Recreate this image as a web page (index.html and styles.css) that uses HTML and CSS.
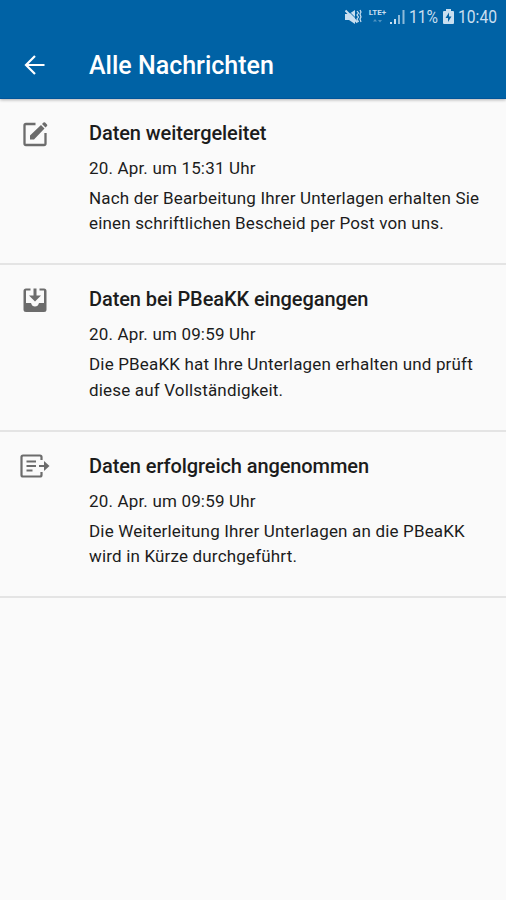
FILE: index.html
```html
<!DOCTYPE html>
<html lang="de">
<head>
<meta charset="utf-8">
<title>Alle Nachrichten</title>
<link rel="stylesheet" href="styles.css">
</head>
<body>
<header class="header">
  <div class="status">
    <svg class="mute" width="17" height="16" viewBox="0 0 17 16"><path d="M0 5h4l6-4v14l-6-4H0z" fill="currentColor"/><path d="M2 .5l12 12" stroke="#0062a5" stroke-width="1"/><path d="M.5 1.500l12 12" stroke="currentColor" stroke-width="2"/><path d="M12 2l1.500 2L12 6l1.500 2L12 10l1.500 3M15 1l1 2-1 2 1 3-1 2 1 3" fill="none" stroke="currentColor" stroke-width="1.200"/></svg>
    <span class="lte"><span>LTE+</span><svg width="9" height="4" viewBox="0 0 9 4" opacity=".4"><path d="M0 2.500L2 0l2 2.500zM5 1h4L7 3.500z" fill="currentColor"/></svg></span>
    <svg class="signal" width="16" height="16" viewBox="0 0 16 16"><path d="M0 13h2v2H0zM4 10h2v5H4z" fill="currentColor"/><path d="M8 6h2v9H8zM12.500 1h2v14h-2z" fill="currentColor" opacity=".7"/></svg>
    <span class="battery-text">11%</span>
    <svg class="battery" width="11" height="16" viewBox="0 0 11 16"><path d="M3 0h5v2h2q1 0 1 1v11q0 1-1 1H1q-1 0-1-1V3q0-1 1-1h2z" fill="currentColor"/><path d="M6 3.500L2.500 9H5v4l3.500-5.500H6z" fill="#0062a5"/></svg>
    <span class="clock">10:40</span>
  </div>
  <div class="toolbar">
    <svg class="back" width="22" height="22" viewBox="0 0 22 22"><path d="M11 1L2 10l9 9M2 10h18.500" fill="none" stroke="currentColor" stroke-width="2.200"/></svg>
    <h1>Alle Nachrichten</h1>
  </div>
</header>
<main>
  <article class="item">
    <svg class="icon" width="30" height="26" viewBox="0 0 30 26"><path d="M15.500 3H6q-1.500 0-1.500 1.500v18Q4.500 24 6 24h18q1.500 0 1.500-1.500V12" fill="none" stroke="currentColor" stroke-width="2.300"/><path d="M10 18.500v-4L21 4l3.500 3.500L14 18.500zM22 3l1.500-1.500q.8-.7 1.600 0l1.900 1.900q.7.800 0 1.600L25.500 6.500z" fill="currentColor"/></svg>
    <div class="content">
      <h2>Daten weitergeleitet</h2>
      <time>20. Apr. um 15:31 Uhr</time>
      <p>Nach der Bearbeitung Ihrer Unterlagen erhalten Sie<br>einen schriftlichen Bescheid per Post von uns.</p>
    </div>
  </article>
  <article class="item">
    <svg class="icon" width="30" height="26" viewBox="0 0 30 26"><path d="M10.500 1.500H6Q3.500 1.500 3.500 4v18.500Q3.500 25 6 25h18q2.500 0 2.500-2.500V4q0-2.500-2.500-2.500h-4.500v2h4.500v12.500h-5q-1 3.500-4 3.500t-4-3.500h-5V3.500h4.500z" fill="currentColor"/><path d="M13.500 1.500h3v7H21L15 14.500 9 8.500h4.500z" fill="currentColor"/></svg>
    <div class="content">
      <h2>Daten bei PBeaKK eingegangen</h2>
      <time>20. Apr. um 09:59 Uhr</time>
      <p>Die PBeaKK hat Ihre Unterlagen erhalten und prüft<br>diese auf Vollständigkeit.</p>
    </div>
  </article>
  <article class="item">
    <svg class="icon" width="30" height="26" viewBox="0 0 30 26"><path d="M21.500 7V4q0-1.500-1.500-1.500H3Q1.500 2.500 1.500 4v18Q1.500 23.500 3 23.500h17Q21.500 23.500 21.500 22v-3" fill="none" stroke="currentColor" stroke-width="2.200"/><path d="M6.500 8.500H16M6.500 13H16M6.500 17.500h6M19 13h7" fill="none" stroke="currentColor" stroke-width="2.200"/><path d="M24 8l5.500 5-5.500 5z" fill="currentColor"/></svg>
    <div class="content">
      <h2>Daten erfolgreich angenommen</h2>
      <time>20. Apr. um 09:59 Uhr</time>
      <p>Die Weiterleitung Ihrer Unterlagen an die PBeaKK<br>wird in Kürze durchgeführt.</p>
    </div>
  </article>
</main>
</body>
</html>
```
FILE: styles.css
```css
* { box-sizing: border-box; }
body { margin: 0; min-height: 900px; background: #fafafa; color: #1c1c1c; font-family: Roboto, "Liberation Sans", sans-serif; }
h1, h2, p { margin: 0; white-space: nowrap; }
svg { flex: none; }
.header { height: 99px; background: #0062a5; color: #fff; border-bottom: 1px solid #00559a; box-shadow: 0 1px 3px rgba(0, 0, 0, .3); }
.status { height: 33px; display: flex; align-items: center; justify-content: flex-end; padding-right: 7px; color: #c9dff0; font-size: 18px; line-height: 33px; }
.mute { margin-right: 6px; }
.lte { display: flex; flex-direction: column; align-items: center; gap: 2px; width: 19px; height: 16px; margin-right: 3px; font-size: 8px; font-weight: 700; line-height: 8px; }
.signal { margin-right: 3px; }
.battery-text, .clock { transform: scaleX(.87); transform-origin: left; white-space: nowrap; }
.battery-text { width: 30px; margin-right: 4px; }
.battery { margin-right: 4px; }
.clock { width: 41px; }
.toolbar { height: 66px; display: flex; align-items: center; padding-left: 24px; }
.back { margin-right: 43px; }
h1 { font-size: 25px; font-weight: 500; line-height: 66px; }
.item { display: flex; height: 166.400px; padding: 21px 0 0 20px; border-bottom: 2px solid #e4e4e4; }
.icon { margin: 1px 39px 0 0; color: #6c6c6c; }
.item:last-child .icon { margin-top: 0; }
h2 { font-size: 20px; font-weight: 500; line-height: 26px; letter-spacing: -.09px; }
time { display: block; margin-top: 9px; font-size: 17px; line-height: 26px; letter-spacing: .17px; }
p { margin-top: 5px; font-size: 17px; line-height: 25.300px; letter-spacing: .17px; }
```
